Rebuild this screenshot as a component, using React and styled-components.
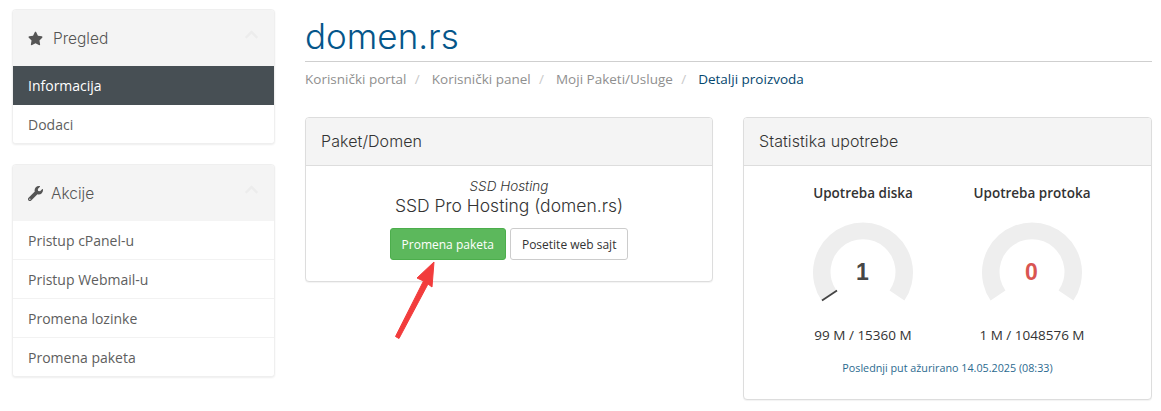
import React from "react";
import styled, { createGlobalStyle } from "styled-components";
import { FaStar, FaWrench, FaChevronUp } from "react-icons/fa";

const Global = createGlobalStyle`
  html, body { margin: 0; padding: 0; background: #fff; }
  body { font-family: "Open Sans", "Liberation Sans", sans-serif; font-size: 14px; color: #333; }
  * { box-sizing: border-box; }
`;

const Page = styled.div`
  width: 1161px; height: 411px; overflow: hidden;
  padding: 9px 9px 0 12px;
  display: flex; gap: 30px; align-items: flex-start;
`;
const Sidebar = styled.aside`
  width: 263px; flex: none;
  display: flex; flex-direction: column; gap: 20px;
`;
const SideCard = styled.section`
  border: 1px solid #efefef; border-radius: 4px; background: #fff;
  box-shadow: 0 1px 2px rgba(0,0,0,.07); overflow: hidden;
`;
const SideHead = styled.header`
  height: 56px; background: #f4f4f4; padding: 0 15px;
  display: flex; align-items: center; gap: ${p => p.$gap}px;
  font-family: Inter, sans-serif; font-weight: 300; font-size: 15.5px; color: #555;
  svg.lead { color: #555; font-size: 15px; flex: none; }
`;
const SideTitle = styled.span`flex: 1;`;
const Chevron = styled(FaChevronUp)`color: #ececec; font-size: 15px; margin-bottom: 7px;`;
const SideItem = styled.div`
  height: 39px; padding: 0 15px; display: flex; align-items: center;
  font-size: 14px; color: ${p => p.$active ? "#fff" : "#5e5e5e"};
  background: ${p => p.$active ? "#474f54" : "#fff"};
  border-bottom: ${p => p.$line ? "1px solid #f2f2f2" : "none"};
  &:last-child { height: 38px; border-bottom: none; }
`;
const Main = styled.main`flex: 1; min-width: 0;`;
const Title = styled.h1`
  margin: 0; height: 53px; padding-top: 4px;
  font-family: Inter, sans-serif; font-weight: 300; font-size: 35px; line-height: 46px;
  color: #05568a;
  border-bottom: 1px solid #cfcfcf;
`;
const Crumbs = styled.nav`
  display: flex; align-items: center; height: 33px; font-size: 13.5px; color: #8f8f8f;
`;
const Crumb = styled.span`color: ${p => p.$current ? "#05476f" : "#8f8f8f"};`;
const Sep = styled.span`color: #c9c9c9; margin: 0 12px 0 8.3px;`;
const Columns = styled.div`
  display: grid; grid-template-columns: 408px 409px; gap: 30px; margin-top: 22px; align-items: start;
`;
const LeftCol = styled.div`position: relative;`;
const Panel = styled.section`
  border: 1px solid #ddd; border-radius: 4px; background: #fff; overflow: hidden;
  box-shadow: 0 1px 1px rgba(0,0,0,.05);
`;
const PanelHead = styled.header`
  height: 48px; padding: 0 15px 2px; background: #f4f4f4; border-bottom: 1px solid #ddd;
  display: flex; align-items: center;
  font-family: Inter, sans-serif; font-weight: 300; font-size: 16px; letter-spacing: .08px; color: #333;
`;
const ProductBody = styled.div`
  height: 115px; padding-top: 12px; display: flex; flex-direction: column; align-items: center;
`;
const Group = styled.em`font-family: Inter, sans-serif; font-weight: 300; font-size: 13.5px; line-height: 16px; color: #333;`;
const Product = styled.div`font-family: Inter, sans-serif; font-weight: 300; font-size: 17.5px; line-height: 24px; color: #333;`;
const Buttons = styled.div`display: flex; gap: 4px; margin-top: 10px;`;
const Button = styled.button`
  height: 32px; padding: 0 11px; border-radius: 3px; font: 12px "Open Sans", sans-serif;
  border: 1px solid ${p => p.$primary ? "#4cae4c" : "#ccc"};
  background: ${p => p.$primary ? "#5cb85c" : "#fff"};
  color: ${p => p.$primary ? "#fff" : "#333"};
`;
const Arrow = styled.svg`position: absolute; left: 85px; top: 140px;`;
const StatsBody = styled.div`height: 233px; padding-top: 18px; display: flex; flex-direction: column; align-items: center;`;
const Gauges = styled.div`display: grid; grid-template-columns: 169px 169px;`;
const GaugeCol = styled.div`display: flex; flex-direction: column; align-items: center;`;
const GaugeTitle = styled.div`font-weight: 600; font-size: 13.5px; line-height: 19px; color: #333;`;
const Usage = styled.div`font-size: 13.5px; line-height: 19px; color: #333; margin-top: -1px;`;
const Updated = styled.div`font-size: 10.75px; line-height: 15px; color: #2b6a8f; margin-top: 16px;`;

function Gauge({ value, color, needle }) {
  return (
    <svg width="110" height="110" viewBox="0 0 110 110" style={{ marginTop: 14 }}>
      <path d="M13.6 83.6 A50 50 0 1 1 96.4 83.6 L81.6 73.4 A32.5 32.5 0 1 0 28.4 73.4 Z" fill="#eeeeee" />
      {needle && <line x1="14" y1="83.4" x2="29" y2="73.6" stroke="#444" strokeWidth="1.8" />}
      <text x="54.5" y="63" textAnchor="middle" fontFamily="Liberation Sans, sans-serif" fontWeight="700" fontSize="23" fill={color} opacity="0.99">{value}</text>
    </svg>
  );
}

export default function App() {
  return (
    <Page>
      <Global />
      <Sidebar>
        <SideCard>
          <SideHead $gap={10}><FaStar className="lead" /><SideTitle>Pregled</SideTitle><Chevron /></SideHead>
          <SideItem $active>Informacija</SideItem>
          <SideItem>Dodaci</SideItem>
        </SideCard>
        <SideCard>
          <SideHead $gap={8}><FaWrench className="lead" /><SideTitle>Akcije</SideTitle><Chevron /></SideHead>
          <SideItem $line>Pristup cPanel-u</SideItem>
          <SideItem $line>Pristup Webmail-u</SideItem>
          <SideItem $line>Promena lozinke</SideItem>
          <SideItem>Promena paketa</SideItem>
        </SideCard>
      </Sidebar>
      <Main>
        <Title>domen.rs</Title>
        <Crumbs>
          <Crumb>Korisnički portal</Crumb><Sep>/</Sep>
          <Crumb>Korisnički panel</Crumb><Sep>/</Sep>
          <Crumb>Moji Paketi/Usluge</Crumb><Sep>/</Sep>
          <Crumb $current>Detalji proizvoda</Crumb>
        </Crumbs>
        <Columns>
          <LeftCol>
            <Panel>
              <PanelHead>Paket/Domen</PanelHead>
              <ProductBody>
                <Group>SSD Hosting</Group>
                <Product>SSD Pro Hosting (domen.rs)</Product>
                <Buttons>
                  <Button $primary>Promena paketa</Button>
                  <Button>Posetite web sajt</Button>
                </Buttons>
              </ProductBody>
            </Panel>
            <Arrow width="50" height="85" viewBox="0 0 50 85">
              <path d="M44 5 L27 21 L33.500 24 L5.500 79.500 L9 81.500 L38 27 L42 30 Z" fill="#f23c3c" stroke="#f23c3c" strokeWidth="1" strokeLinejoin="round" />
            </Arrow>
          </LeftCol>
          <Panel>
            <PanelHead>Statistika upotrebe</PanelHead>
            <StatsBody>
              <Gauges>
                <GaugeCol>
                  <GaugeTitle>Upotreba diska</GaugeTitle>
                  <Gauge value="1" color="#444" needle />
                  <Usage>99 M / 15360 M</Usage>
                </GaugeCol>
                <GaugeCol>
                  <GaugeTitle>Upotreba protoka</GaugeTitle>
                  <Gauge value="0" color="#d9534f" />
                  <Usage>1 M / 1048576 M</Usage>
                </GaugeCol>
              </Gauges>
              <Updated>Poslednji put ažurirano 14.05.2025 (08:33)</Updated>
            </StatsBody>
          </Panel>
        </Columns>
      </Main>
    </Page>
  );
}
